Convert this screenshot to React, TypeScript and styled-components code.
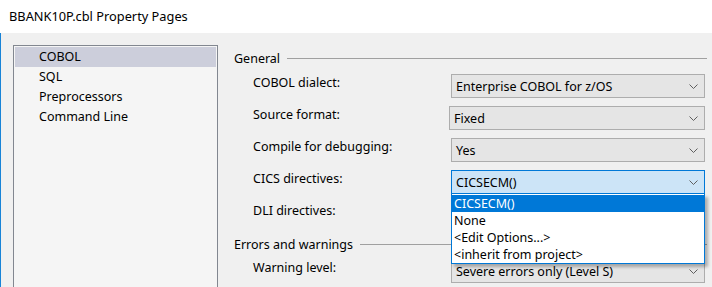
import { FC } from "react";
import styled, { createGlobalStyle } from "styled-components";

const GlobalStyle = createGlobalStyle`
  html, body {
    margin: 0;
    padding: 0;
    background: #f0f0f0;
    overflow: hidden;
  }
  body {
    font-family: "Noto Sans", "Open Sans", sans-serif;
    font-size: 12.5px;
    color: #000;
  }
`;

const pages = ["COBOL", "SQL", "Preprocessors", "Command Line"];
const options = ["CICSECM()", "None", "<Edit Options...>", "<inherit from project>"];

const Chevron: FC = () => (
  <svg width="9" height="5" viewBox="0 0 9 5">
    <path d="M0.5 0.5 L4.5 4.5 L8.5 0.5" fill="none" stroke="#5f5f5f" strokeWidth="1" />
  </svg>
);

const App: FC = (): JSX.Element => {
  return (
    <Window>
      <GlobalStyle />
      <TitleBar>BBANK10P.cbl Property Pages</TitleBar>
      <Body>
        <PageList>
          {pages.map((p, i) => (
            <PageItem key={p} $selected={i === 0}>
              {p}
            </PageItem>
          ))}
        </PageList>
        <Main>
          <GroupHeader>
            <span>General</span>
            <Rule />
          </GroupHeader>
          <Row>
            <Label>COBOL dialect:</Label>
            <Combo>
              <span>Enterprise COBOL for z/OS</span>
              <Chevron />
            </Combo>
          </Row>
          <Row>
            <Label>Source format:</Label>
            <Combo $nudge={-2}>
              <span>Fixed</span>
              <Chevron />
            </Combo>
          </Row>
          <Row>
            <Label>Compile for debugging:</Label>
            <Combo>
              <span>Yes</span>
              <Chevron />
            </Combo>
          </Row>
          <Row>
            <Label>CICS directives:</Label>
            <ComboWrap>
              <Combo $active>
                <span>CICSECM()</span>
                <Chevron />
              </Combo>
              <Popup>
                {options.map((o, i) => (
                  <PopupItem key={o} $selected={i === 0}>
                    {o}
                  </PopupItem>
                ))}
              </Popup>
            </ComboWrap>
          </Row>
          <Row>
            <Label>DLI directives:</Label>
            <Combo>
              <span></span>
              <Chevron />
            </Combo>
          </Row>
          <GroupHeader $second>
            <span>Errors and warnings</span>
            <Rule />
          </GroupHeader>
          <Row>
            <Label>Warning level:</Label>
            <Combo>
              <span>Severe errors only (Level S)</span>
              <Chevron />
            </Combo>
          </Row>
        </Main>
      </Body>
    </Window>
  );
};

export default App;

const Window = styled.div`
  width: 712px;
  height: 287px;
  display: flex;
  flex-direction: column;
  background: #f0f0f0;
  overflow: hidden;
`;

const TitleBar = styled.div`
  height: 33px;
  flex-shrink: 0;
  background: #ffffff;
  display: flex;
  align-items: center;
  padding-left: 9px;
  padding-bottom: 1px;
  box-sizing: border-box;
  font-size: 12.8px;
  color: #000;
`;

const Body = styled.div`
  flex: 1;
  display: flex;
  border-left: 1px solid #1883d7;
  padding-left: 12px;
  gap: 16px;
`;

const PageList = styled.div`
  width: 205px;
  flex-shrink: 0;
  margin-top: 12px;
  margin-bottom: -20px;
  box-sizing: border-box;
  border: 1px solid #828790;
  background: #f5f5f5;
  padding: 1px;
  display: flex;
  flex-direction: column;
`;

const PageItem = styled.div<{ $selected?: boolean }>`
  height: 20px;
  line-height: 20px;
  padding-left: 24px;
  background: ${({ $selected }) => ($selected ? "#cccedb" : "transparent")};
`;

const Main = styled.div`
  flex: 1;
  padding-top: 18px;
  padding-right: 5px;
  display: flex;
  flex-direction: column;
`;

const GroupHeader = styled.div<{ $second?: boolean }>`
  height: 16px;
  line-height: 16px;
  display: flex;
  align-items: center;
  gap: 7px;
  margin-top: ${({ $second }) => ($second ? "3px" : "0")};
  margin-bottom: ${({ $second }) => ($second ? "6px" : "7px")};
`;

const Rule = styled.div`
  flex: 1;
  height: 1px;
  background: #a0a0a0;
  margin-top: -1px;
`;

const Row = styled.div`
  display: grid;
  grid-template-columns: 217px 254px;
  height: 24px;
  margin-bottom: 8px;
`;

const Label = styled.div`
  padding-left: 19px;
  line-height: 18px;
  white-space: nowrap;
`;

const ComboWrap = styled.div`
  position: relative;
`;

const Combo = styled.div<{ $active?: boolean; $nudge?: number }>`
  height: 24px;
  box-sizing: border-box;
  margin-left: ${({ $nudge }) => $nudge ?? 0}px;
  border: 1px solid ${({ $active }) => ($active ? "#0078d7" : "#adadad")};
  background: ${({ $active }) => ($active ? "#cce4f7" : "#e5e5e5")};
  display: flex;
  align-items: center;
  justify-content: space-between;
  padding: 0 6px 0 4px;
  white-space: nowrap;
`;

const Popup = styled.div`
  position: absolute;
  top: 24px;
  left: 0;
  width: 254px;
  box-sizing: border-box;
  border: 1px solid #0078d7;
  border-top: none;
  background: #ffffff;
  padding-top: 1px;
  box-shadow: 3px 3px 3px rgba(0, 0, 0, 0.28);
  z-index: 10;
`;

const PopupItem = styled.div<{ $selected?: boolean }>`
  height: 17px;
  line-height: 17px;
  padding-left: 2px;
  background: ${({ $selected }) => ($selected ? "#0078d7" : "transparent")};
  color: ${({ $selected }) => ($selected ? "#ffffff" : "#000000")};
  white-space: nowrap;
`;
